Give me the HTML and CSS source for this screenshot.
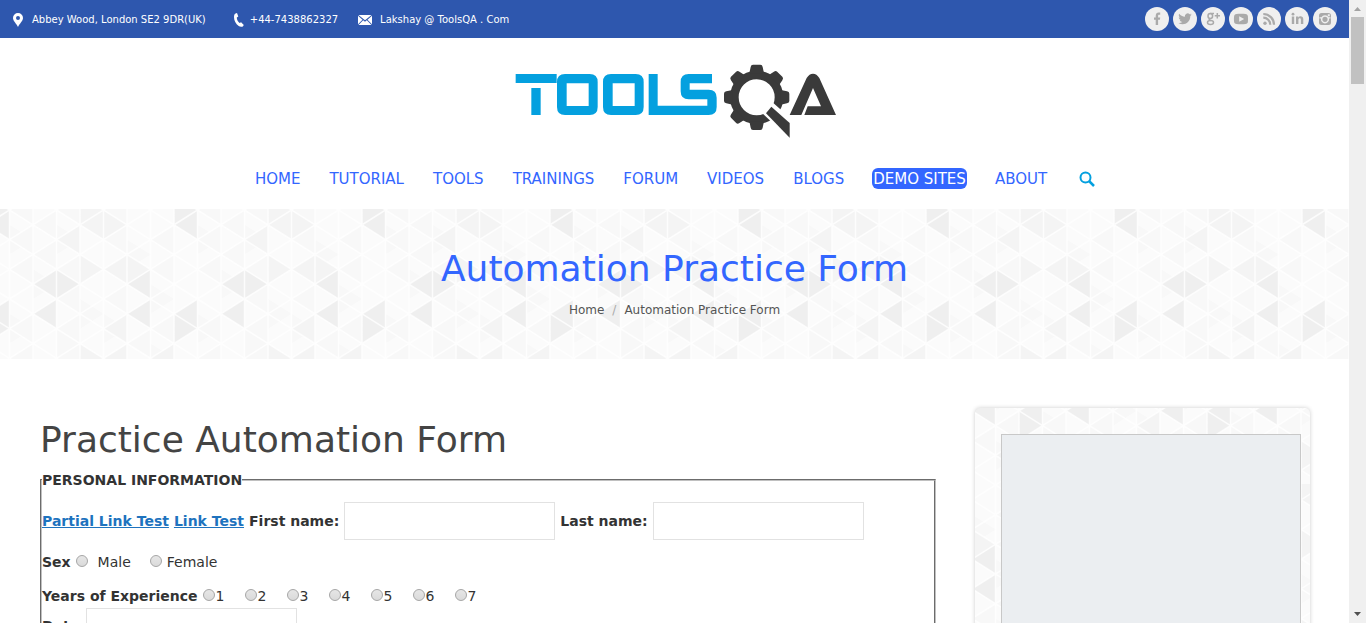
FILE: index.html
```html
<!DOCTYPE html>
<html lang="en">
<head>
<meta charset="utf-8">
<title>Automation Practice Form</title>
<link rel="stylesheet" href="styles.css">
</head>
<body>
<div class="page">
  <div class="topbar">
    <ul class="contact">
      <li class="contact-address"><svg width="10" height="14" viewBox="0 0 10 14"><path fill="#fff" fill-rule="evenodd" d="M5 0a5 5 0 0 1 5 5c0 3-3.400 5.500-5 9C3.400 10.500 0 8 0 5a5 5 0 0 1 5-5zm0 3a2 2 0 1 0 0 4 2 2 0 0 0 0-4z"/></svg>Abbey Wood, London SE2 9DR(UK)</li>
      <li class="contact-phone"><svg width="10" height="14" viewBox="0 0 10 14"><path fill="#fff" d="M1.500.5 3 0l1.300 3.600-1.500 1c0 2 1 4 2.700 5.300l1.600-.7L9.800 12l-1 1.400C7.700 14 6 14 4.700 13 1.200 10.500-.600 6.500.2 2.300.3 1.500.8.9 1.500.5z"/></svg>+44-7438862327</li>
      <li class="contact-mail"><svg width="14" height="10" viewBox="0 0 14 10"><path fill="#fff" d="M.5 0h13L7 5.200zM0 .8 4.500 4.700 0 9.200zM14 .8v8.400L9.500 4.700zM5.200 5.200 7 6.700l1.800-1.500L13.500 10H.5z"/></svg>Lakshay @ ToolsQA . Com</li>
    </ul>
    <nav class="social" aria-label="Social links">
      <a href="#" aria-label="Facebook"><svg viewBox="0 0 24 24"><path d="M9 10.500h1.700V9c0-2.600 1.200-3.600 3-3.600h1.500v2.400h-1.100c-.8 0-1 .4-1 1.100v1.600h2.100l-.3 2.300h-1.800V18h-2.400v-5.200H9z"/></svg></a>
      <a href="#" aria-label="Twitter"><svg viewBox="0 0 24 24"><path d="M18.700 7.500c-.5.300-1 .4-1.600.5.600-.4 1-.9 1.200-1.500-.5.300-1.100.5-1.700.7a2.800 2.800 0 0 0-4.700 2.500C9.600 9.600 7.500 8.500 6.200 6.800c-.8 1.300-.4 2.900.8 3.700-.4 0-.8-.1-1.200-.3 0 1.300.9 2.500 2.200 2.700-.4.100-.8.100-1.200 0 .3 1.100 1.400 1.900 2.600 2-1.200.9-2.600 1.300-4 1.100 5.300 3.300 12-.3 11.900-7 .6-.4 1-.9 1.400-1.500z"/></svg></a>
      <a href="#" aria-label="Google Plus"><svg viewBox="0 0 24 24"><g fill="none" stroke="#aaa" stroke-width="1.500"><ellipse cx="9.300" cy="9" rx="2.300" ry="2.500"/><path d="M9.300 6.400H13M9 11.500c-1.700 1.200-.2 1.800 1 2.100M13.700 8.700h5.300M16.300 6v5.400"/><ellipse cx="9.500" cy="15.600" rx="3" ry="2"/></g></svg></a>
      <a href="#" aria-label="YouTube"><svg viewBox="0 0 24 24"><path fill-rule="evenodd" d="M7.500 7c3-.400 6-.400 9 0 1.500.2 2.300 1 2.400 2.300.2 2 .2 3.500 0 5.400-.1 1.300-.9 2.100-2.400 2.300-3 .3-6 .3-9 0-1.500-.2-2.300-1-2.400-2.300-.2-2-.2-3.400 0-5.400C5.200 8 6 7.200 7.500 7zM10.200 9.300v5.400l5-2.700z"/></svg></a>
      <a href="#" aria-label="RSS"><svg viewBox="0 0 24 24"><circle cx="8" cy="16.200" r="1.700"/><path fill="none" stroke="#aaa" stroke-width="2.200" d="M6.300 10.700a7 7 0 0 1 7 7M6.300 7a10.700 10.700 0 0 1 10.700 10.700"/></svg></a>
      <a href="#" aria-label="LinkedIn"><svg viewBox="0 0 24 24"><path d="M6.800 9.500h2.400V17H6.800zM11 9.500h2.300v1c1.300-1.900 5-1.600 5 1.700V17h-2.400v-4.300c0-2-2.500-1.900-2.500.1V17H11z"/><circle cx="8" cy="7.200" r="1.400"/></svg></a>
      <a href="#" aria-label="Instagram"><svg viewBox="0 0 24 24"><path fill-rule="evenodd" d="M8.500 6h7A2.500 2.500 0 0 1 18 8.500v7a2.500 2.500 0 0 1-2.500 2.500h-7A2.500 2.500 0 0 1 6 15.500v-7A2.500 2.500 0 0 1 8.500 6zm6.300 1.200v2h2v-2zM6.500 10.300v1.100H8a4.100 4.100 0 1 0 8 0h1.500v-1.100h-1.900a4.100 4.100 0 0 0-7.200 0zM12 9.700a2.600 2.600 0 1 1 0 5.200 2.600 2.600 0 0 1 0-5.200z"/></svg></a>
    </nav>
  </div>

  <header class="header">
    <a class="logo" href="#" aria-label="ToolsQA">
      <svg width="322" height="75" viewBox="46 39 966 225">
        <g fill="#04a0df">
          <path d="M48 72h123v27H48zM95 114h28v81H95z"/>
          <path fill-rule="evenodd" d="M196 72h74q24 0 24 24v75q0 24-24 24h-74q-24 0-24-24V96q0-24 24-24zm5 28v68h66v-68z"/>
          <path fill-rule="evenodd" d="M334 72h74q24 0 24 24v75q0 24-24 24h-74q-24 0-24-24V96q0-24 24-24zm5 28v68h66v-68z"/>
          <path d="M447 72h27v95h149v-19h-56q-24 0-24-24V96q0-24 24-24h70v28h-67v19h57q24 0 24 24v28q0 24-24 24H447z"/>
        </g>
        <g fill="#3a3a3a">
          <defs><path id="tooth" d="M-22-72-18-91Q-17-98-11-98H11Q17-98 18-91L22-72z"/></defs>
          <g transform="translate(771 142)">
            <circle r="67" fill="none" stroke="#3a3a3a" stroke-width="26"/>
            <use href="#tooth"/>
            <use href="#tooth" transform="rotate(45)"/>
            <use href="#tooth" transform="rotate(90)"/>
            <use href="#tooth" transform="rotate(180)"/>
            <use href="#tooth" transform="rotate(225)"/>
            <use href="#tooth" transform="rotate(270)"/>
            <use href="#tooth" transform="rotate(315)"/>
          </g>
          <path fill="#fff" d="m821 159 60 53v65l-93-87z"/>
          <path d="m815 170 55 49v44l-71-73z"/>
          <path d="M870 195 921 84q8-13 19-13t19 13l50 111h-95l10-26h40l-24-55-35 81z"/>
        </g>
      </svg>
    </a>
    <nav class="menu">
      <a href="#">HOME</a>
      <a href="#">TUTORIAL</a>
      <a href="#">TOOLS</a>
      <a href="#">TRAININGS</a>
      <a href="#">FORUM</a>
      <a href="#">VIDEOS</a>
      <a href="#">BLOGS</a>
      <a class="active" href="#">DEMO SITES</a>
      <a href="#">ABOUT</a>
      <button class="search" type="button" aria-label="Search"><svg width="16" height="16" viewBox="0 0 16 16"><circle cx="6.500" cy="6.500" r="5" fill="none" stroke="#04a0df" stroke-width="2"/><path stroke="#04a0df" stroke-width="2.500" d="m10 10 5 5"/></svg></button>
    </nav>
  </header>

  <section class="banner">
    <h1>Automation Practice Form</h1>
    <nav class="crumbs"><a href="#">Home</a><span class="slash">/</span><span>Automation Practice Form</span></nav>
  </section>

  <div class="content">
    <main class="main">
      <h2>Practice Automation Form</h2>
      <form>
        <fieldset>
          <legend>PERSONAL INFORMATION</legend>
          <div class="row row-name">
            <a href="#">Partial Link Test</a>
            <a href="#">Link Test</a>
            <label for="first">First name:</label>
            <input type="text" id="first">
            <label for="last">Last name:</label>
            <input type="text" id="last">
          </div>
          <div class="row row-options row-sex" role="radiogroup" aria-labelledby="sex-title">
            <strong id="sex-title">Sex</strong>
            <label class="male"><input type="radio" name="sex">Male</label>
            <label class="female"><input type="radio" name="sex">Female</label>
          </div>
          <div class="row row-options" role="radiogroup" aria-labelledby="exp-title">
            <strong id="exp-title">Years of Experience</strong>
            <div class="years">
              <label><input type="radio" name="exp">1</label>
              <label><input type="radio" name="exp">2</label>
              <label><input type="radio" name="exp">3</label>
              <label><input type="radio" name="exp">4</label>
              <label><input type="radio" name="exp">5</label>
              <label><input type="radio" name="exp">6</label>
              <label><input type="radio" name="exp">7</label>
            </div>
          </div>
          <div class="row row-date">
            <label for="date">Date:</label>
            <input type="text" id="date">
          </div>
        </fieldset>
      </form>
    </main>
    <aside class="sidebar"><div class="ad"></div></aside>
  </div>
</div>
<div class="scrollbar" aria-hidden="true">
  <svg width="17" height="17" viewBox="0 0 17 17"><path fill="#a3a3a3" d="m5 11 3.500-4 3.500 4z"/></svg>
  <div class="thumb"></div>
  <svg class="down" width="17" height="17" viewBox="0 0 17 17"><path fill="#505050" d="m5 6 3.500 4L12 6z"/></svg>
</div>
</body>
</html>
```
FILE: styles.css
```css
* { box-sizing: border-box; }

body {
  margin: 0;
  display: flex;
  height: 100vh;
  overflow: hidden;
  background: #fff;
  color: #333;
  font: 14px/20px "DejaVu Sans", Verdana, sans-serif;
}

a { text-decoration: none; }

.page { flex: 1; min-width: 0; overflow: hidden; }

.topbar {
  display: flex;
  align-items: center;
  justify-content: space-between;
  height: 38px;
  padding: 0 12px;
  background: #2e57ae;
}

.contact {
  display: flex;
  gap: 20px;
  margin: 0;
  padding: 2px 1px 0;
  list-style: none;
  color: #fff;
  font-size: 10px;
}
.contact li { display: flex; align-items: center; gap: 9px; }
.contact .contact-address { margin-right: 8px; }
.contact .contact-phone { gap: 6px; }
.contact .contact-mail { gap: 8px; }

.social { display: flex; gap: 4px; }
.social a { width: 24px; height: 24px; border-radius: 50%; background: #efefef; }
.social svg { display: block; fill: #aaa; }

.header { display: flex; flex-direction: column; align-items: center; height: 171px; padding-top: 25px; }
.logo { padding-left: 3px; }
.logo svg { display: block; }

.menu { display: flex; align-items: center; gap: 27px; margin-top: 30px; }
.menu a { padding: 1px 1px 0; border-radius: 6px; color: #36f; font-size: 15px; line-height: 20px; }
.menu .active { background: #36f; color: #fff; }
.search { display: flex; margin-left: 4px; padding: 0; border: 0; background: none; }

.banner, .sidebar {
  background-color: #fbfbfb;
  background-image: url("data:image/svg+xml,%3Csvg xmlns='http://www.w3.org/2000/svg' width='188' height='178'%3E%3Cdefs%3E%3Cg id='t'%3E%3Cg fill='%23f8f8f8'%3E%3Cpath d='M0 2L1 1V3zM2 4L3 3V5zM4 2L5 1V3zM6 4L7 3V5zM0 4L1 3V5zM4 6L5 5V7zM6 8L7 7V9zM0 8L1 7V9zM2 8L3 7V9zM2 6L3 5V7zM5 9L6 8V10zM1 3L2 2V4zM3 11L4 10V12zM1 1L2 0V2zM6 2L7 1V3zM0 10L1 9V11zM2 10L3 9V11zM0 0L1 -1V1zM2 0L3 -1V1zM4 0L5 -1V1zM0 1L1 2L0 3zM2 1L3 2L2 3zM6 5L7 6L6 7zM4 7L5 8L4 9zM0 7L1 8L0 9zM6 9L7 10L6 11zM5 2L6 3L5 4zM1 4L2 5L1 6zM3 6L4 7L3 8zM7 10L8 11L7 12zM2 8L3 9L2 10z'/%3E%3C/g%3E%3Cg fill='%23f4f4f4'%3E%3Cpath d='M3 1L4 0V2zM4 0L5 1L4 2zM2 2L3 1V3zM3 3L4 4L3 5zM4 4L5 3V5zM4 8L5 7V9zM3 9L4 10L3 11zM4 10L5 9V11zM6 10L7 9V11zM5 3L6 4L5 5zM3 -1L4 0L3 1z'/%3E%3C/g%3E%3Cg fill='%23efefef'%3E%3Cpath d='M7 1L8 0V2zM7 -1L8 0L7 1zM1 5L2 4V6zM2 4L3 5L2 6zM5 5L6 4V6zM1 7L2 6V8zM5 7L6 6V8zM7 7L8 6V8zM7 7L8 8L7 9zM7 11L8 12L7 13z'/%3E%3C/g%3E%3C/g%3E%3C/defs%3E%3Cg transform='translate(9.5 1) scale(23.5 14.833)'%3E%3Cuse href='%23t'/%3E%3Cuse href='%23t' x='-8'/%3E%3Cpath fill='none' stroke='%23fff' stroke-opacity='.8' stroke-width='1.500' vector-effect='non-scaling-stroke' d='M0 -1V13M1 -1V13M2 -1V13M3 -1V13M4 -1V13M5 -1V13M6 -1V13M7 -1V13M-2 -12L10 0M-2 -10L10 2M-2 -8L10 4M-2 -6L10 6M-2 -4L10 8M-2 -2L10 10M-2 0L10 12M-2 2L10 14M-2 4L10 16M-2 6L10 18M-2 8L10 20M-2 10L10 22M-2 12L10 24M-2 0L10 -12M-2 2L10 -10M-2 4L10 -8M-2 6L10 -6M-2 8L10 -4M-2 10L10 -2M-2 12L10 0M-2 14L10 2M-2 16L10 4M-2 18L10 6M-2 20L10 8M-2 22L10 10M-2 24L10 12'/%3E%3C/g%3E%3C/svg%3E");
}

.banner { height: 150px; padding-top: 37px; text-align: center; }
h1, h2 { margin: 0; font-size: 36px; font-weight: 400; line-height: 46px; }
h1 { color: #36f; }

.crumbs { display: flex; justify-content: center; gap: 8px; margin-top: 8px; color: #555; font-size: 12px; }
.crumbs a { color: #555; }
.crumbs .slash { color: #aaa; }

.content { display: flex; gap: 39px; padding: 49px 39px 0 40px; }
.main { flex: 1; min-width: 0; padding-top: 9px; }
h2 { color: #444; }

form { padding-top: 7px; }
fieldset { margin: 0; padding: 0 0 20px; border: 2px groove #c0c0c0; }
legend { padding: 0; font-weight: 700; }

.row { display: flex; align-items: center; gap: 5px; font-weight: 700; }
.row a { color: #1e73be; text-decoration: underline; }
.row input[type="text"] { width: 211px; height: 38px; border: 1px solid #e2e2e2; background: #fff; }
.row-name { padding: 12px 0 10px; }
.row-options { height: 24px; }
.row-sex { margin-bottom: 10px; }
.row-options label { display: flex; align-items: center; gap: 1px; font-weight: 400; }
.row-options .male { gap: 10px; margin-right: 14px; }
.row-options .female { gap: 5px; }
.row-date { align-items: flex-start; gap: 1px; }
.row-date label { padding-top: 8px; }

input[type="radio"] {
  appearance: none;
  width: 12px;
  height: 12px;
  margin: 0 0 3px;
  border: 1px solid #a6a6a6;
  border-radius: 50%;
  background: linear-gradient(#e6e6e6, #dadada);
}
.years { display: grid; grid-template-columns: repeat(7, 42px); }

.sidebar {
  width: 335px;
  height: 660px;
  padding: 26px 9px 26px 26px;
  border-radius: 5px;
  background-position: 58px -102px;
  box-shadow: 0 0 4px rgba(0, 0, 0, .2);
}
.ad { height: 100%; border: 1px solid #c8c8c8; background: #ebeef1; }

.scrollbar { display: flex; flex-direction: column; width: 17px; background: #f0f0f0; }
.thumb { height: 67px; margin: 0 2px; background: #c1c1c1; }
.down { margin-top: auto; }
```
